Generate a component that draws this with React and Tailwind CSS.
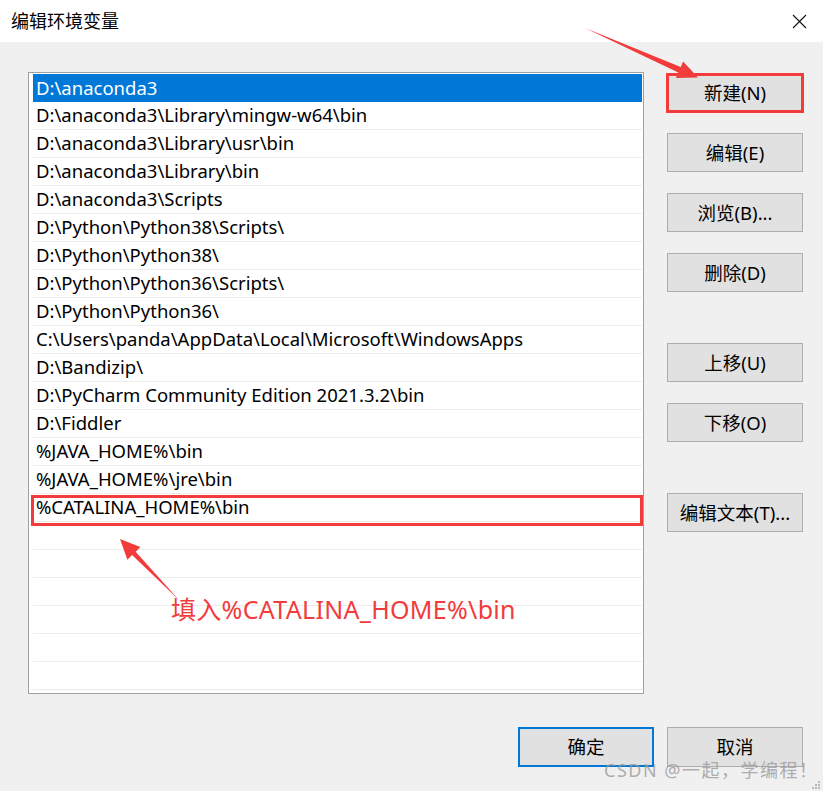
import React from "react";

const paths = [
  "D:\\anaconda3",
  "D:\\anaconda3\\Library\\mingw-w64\\bin",
  "D:\\anaconda3\\Library\\usr\\bin",
  "D:\\anaconda3\\Library\\bin",
  "D:\\anaconda3\\Scripts",
  "D:\\Python\\Python38\\Scripts\\",
  "D:\\Python\\Python38\\",
  "D:\\Python\\Python36\\Scripts\\",
  "D:\\Python\\Python36\\",
  "C:\\Users\\panda\\AppData\\Local\\Microsoft\\WindowsApps",
  "D:\\Bandizip\\",
  "D:\\PyCharm Community Edition 2021.3.2\\bin",
  "D:\\Fiddler",
  "%JAVA_HOME%\\bin",
  "%JAVA_HOME%\\jre\\bin",
  "%CATALINA_HOME%\\bin",
  "", "", "", "", "", "",
];

function Btn({ children, primary = false, className = "" }) {
  const border = primary ? "border-2 border-[#0078d7]" : "border border-[#adadad]";
  return (
    <button className={`w-[136px] h-[39px] bg-[#e1e1e1] ${border} text-[18.5px] text-black flex items-center justify-center ${className}`}>
      {children}
    </button>
  );
}

export default function App() {
  return (
    <div
      className="relative w-[823px] h-[791px] flex flex-col overflow-hidden"
      style={{ fontFamily: '"Noto Sans", "Noto Sans CJK SC", sans-serif' }}
    >
      {/* Title bar */}
      <div className="h-[42px] bg-white flex items-center justify-between pl-[11px] pr-[16px]">
        <span className="text-[18px] text-black leading-none">编辑环境变量</span>
        <svg width="15" height="15" viewBox="0 0 15 15">
          <path d="M1 1 L14 14 M14 1 L1 14" stroke="#111" strokeWidth="1.1" fill="none" />
        </svg>
      </div>

      {/* Body */}
      <div className="flex-1 bg-[#f0f0f0] flex flex-col pl-[28px] pt-[30px]">
        <div className="flex">
          <div className="w-[616px] h-[622px] bg-white border border-[#a0a0a0] pt-[1px] pl-[4px] pr-[1px]">
            {paths.map((p, i) => (
              <div
                key={i}
                className={
                  i === 0
                    ? "h-[28px] bg-[#0078d7] text-white flex items-center pl-[3px] text-[18.5px]"
                    : "h-[28px] border-b border-[#ececec] text-black flex items-center pl-[3px] text-[18.5px]"
                }
              >
                <span className="whitespace-nowrap leading-none">{p}</span>
              </div>
            ))}
          </div>

          <div className="ml-[23px] pt-[1px] flex flex-col gap-[21px]">
            <Btn>新建(N)</Btn>
            <Btn>编辑(E)</Btn>
            <Btn>浏览(B)...</Btn>
            <Btn>删除(D)</Btn>
            <Btn className="mt-[30px]">上移(U)</Btn>
            <Btn>下移(O)</Btn>
            <Btn className="mt-[30px]">编辑文本(T)...</Btn>
          </div>
        </div>

        <div className="flex justify-end gap-[13px] pr-[20px] mt-[33px]">
          <Btn primary className="h-[40px]">确定</Btn>
          <Btn className="h-[40px]">取消</Btn>
        </div>
      </div>

      {/* Red annotations */}
      <svg className="absolute left-0 top-0 pointer-events-none" width="823" height="791">
        <rect x="667.5" y="74.5" width="135" height="37" fill="none" stroke="#f23b3b" strokeWidth="3" />
        <rect x="32.5" y="496.5" width="609" height="28" fill="none" stroke="#f23b3b" strokeWidth="3" />
        <polygon
          points="585,28 680.7,67 683.1,61.5 698,77.5 675.9,77.9 678.3,72.4"
          fill="#f23b3b"
        />
        <polygon
          points="179,600 135.7,551.7 140.4,547.1 120,539 127.4,559.7 132.1,555.1"
          fill="#f23b3b"
        />
      </svg>
      <div className="absolute left-[171px] top-[595px] text-[25px] tracking-[0.3px] leading-none text-[#f23b3b] whitespace-nowrap pt-[2px]">
        填入%CATALINA_HOME%\bin
      </div>

      {/* Watermark */}
      <div className="absolute left-[604px] top-[761px] text-[18px] tracking-[1.5px] leading-none text-[#9a9a9a]/80 whitespace-nowrap">
        CSDN @一起，学编程！
      </div>
      <div className="absolute right-[3px] bottom-[2px] grid grid-cols-3 gap-[1px]">
        <span className="w-[2px] h-[2px]" />
        <span className="w-[2px] h-[2px]" />
        <span className="w-[2px] h-[2px] bg-[#b8b8b8]" />
        <span className="w-[2px] h-[2px]" />
        <span className="w-[2px] h-[2px] bg-[#b8b8b8]" />
        <span className="w-[2px] h-[2px] bg-[#b8b8b8]" />
        <span className="w-[2px] h-[2px] bg-[#b8b8b8]" />
        <span className="w-[2px] h-[2px] bg-[#b8b8b8]" />
        <span className="w-[2px] h-[2px] bg-[#b8b8b8]" />
      </div>
    </div>
  );
}
